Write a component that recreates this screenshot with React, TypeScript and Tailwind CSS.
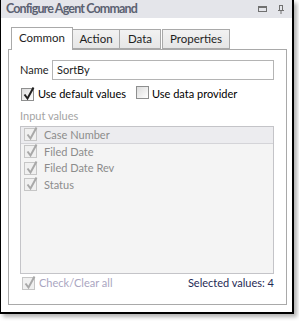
import React from 'react';

function Check({ checked, disabled }: { checked?: boolean; disabled?: boolean }) {
  return (
    <span
      className={
        'relative inline-block w-[13px] h-[13px] shrink-0 border ' +
        (disabled
          ? 'border-[#c6c6c6] bg-[#f0f0f0]'
          : 'border-[#8e8f8f] bg-gradient-to-br from-[#dcdcdc] to-[#ffffff]')
      }
    >
      {checked && (
        <svg className="absolute left-[0px] top-[-3px]" width="14" height="15" viewBox="0 0 14 15">
          <path
            d="M2.5 8.5 L5.5 12.5 L11.5 1.5"
            fill="none"
            stroke={disabled ? '#a8a8a8' : '#202020'}
            strokeWidth="2"
          />
        </svg>
      )}
    </span>
  );
}

const items = ['Case Number', 'Filed Date', 'Filed Date Rev', 'Status'];

export default function App() {
  return (
    <div className="w-[299px] h-[321px] bg-white" style={{ fontFamily: 'Lato, "Noto Sans", sans-serif' }}>
      <div className="w-[294px] h-[314px] flex flex-col border-l border-r-2 border-b-2 border-black bg-white shadow-[3px_3px_4px_rgba(0,0,0,0.3)]">
        {/* title */}
        <div className="h-[18px] bg-[#e4e5ea] flex items-center pl-[5px] pr-[8px]">
          <span className="text-[12.5px] font-bold tracking-[-0.85px] text-[#5b6171] leading-none">Configure Agent Command</span>
          <div className="ml-auto flex items-center gap-[11px]">
            <span className="w-[9px] h-[6px] border-[1.5px] border-t-[2px] border-[#707070]" />
            <svg width="6" height="9" viewBox="0 0 6 9">
              <path d="M1 0.5 H5 M1.5 0.5 V5 M4.5 0.5 V5 M0 5.5 H6 M3 5.5 V9" stroke="#707070" strokeWidth="1" fill="none" />
            </svg>
          </div>
        </div>

        {/* body */}
        <div className="flex-1 pt-[8px] pl-[7px] pr-[5px] pb-[7px] flex flex-col">
          <div className="flex items-end pl-[3px] h-[23px] text-[11.5px] text-[#1e1e1e]">
            <div className="relative z-10 w-[62px] h-[23px] border border-b-0 border-[#a9a9a9] bg-white flex items-center justify-center -mb-px pb-[2px]">
              Common
            </div>
            <div className="w-[47px] h-[20px] border border-l-0 border-[#a9a9a9] bg-gradient-to-b from-[#f2f2f2] to-[#e6e6e6] flex items-center justify-center">
              Action
            </div>
            <div className="w-[41px] h-[20px] border border-l-0 border-[#a9a9a9] bg-gradient-to-b from-[#f2f2f2] to-[#e6e6e6] flex items-center justify-center">
              Data
            </div>
            <div className="w-[68px] h-[20px] border border-[#a9a9a9] bg-gradient-to-b from-[#f2f2f2] to-[#e6e6e6] flex items-center justify-center ml-[1px]">
              Properties
            </div>
          </div>

          <div className="flex-1 border border-[#a9a9a9] bg-white flex flex-col pl-[11px] pr-[12px] pt-[10px] pb-[14px] text-[11px]">
            <div className="flex items-center h-[20px]">
              <span className="w-[32px] text-[#1e1e1e]">Name</span>
              <div className="flex-1 h-[20px] border border-[#b4b4b4] flex items-center pl-[4px] text-[#1e1e1e]">SortBy</div>
            </div>

            <div className="flex items-center h-[13px] mt-[8px] pl-[1px]">
              <Check checked />
              <span className="ml-[4px] text-black">Use default values</span>
              <span className="ml-[10px]">
                <Check />
              </span>
              <span className="ml-[3px] text-black">Use data provider</span>
            </div>

            <div className="mt-[7px] h-[16px] flex items-center text-[#a4a4a4]">Input values</div>

            <div className="mt-[2px] h-[148px] border border-[#c4c4c8] bg-[#f4f4f4] flex flex-col">
              {items.map((it, i) => (
                <div
                  key={it}
                  className={
                    'h-[16.5px] flex items-center pl-[3px] ' +
                    (i === 0 ? 'bg-[#ececef] border-b border-[#d4d4d8]' : '')
                  }
                >
                  <Check checked disabled />
                  <span className="ml-[7px] text-[#8c8c8c]">{it}</span>
                </div>
              ))}
            </div>

            <div className="mt-auto flex items-center h-[13px] pl-[2px]">
              <Check checked disabled />
              <span className="ml-[4px] text-[#aaa6bf]">Check/Clear all</span>
              <span className="ml-auto text-[#1f2a55]">Selected values: 4</span>
            </div>
          </div>
        </div>
      </div>
    </div>
  );
}
